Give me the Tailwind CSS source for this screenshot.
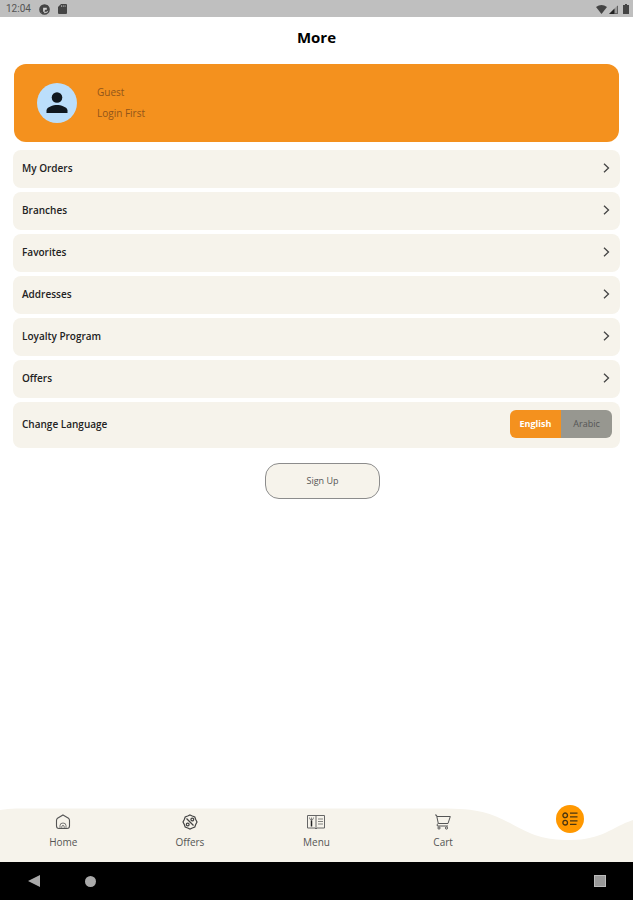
<!DOCTYPE html>
<html lang="en">
<head>
    <meta charset="UTF-8">
    <meta name="viewport" content="width=device-width, initial-scale=1.0">
    <title>More</title>
    <script src="https://cdn.jsdelivr.net/npm/@tailwindcss/browser@4"></script>
</head>
<body class="bg-white text-[#222] font-['Open_Sans',sans-serif] min-h-screen flex flex-col">
    <!-- Status bar -->
    <div class="bg-[#bfbfbf] h-[17px] pl-[6px] pr-1 pt-px flex items-center justify-between text-[#444]">
        <div class="flex items-center gap-2">
            <span class="font-[Roboto,sans-serif] text-[10px] leading-4 text-[#555]">12:04</span>
            <svg class="w-[11px] h-[11px]" viewBox="0 0 12 12">
                <circle cx="6" cy="6" r="5" fill="none" stroke="currentColor" stroke-width="1.6"/>
                <path d="M1 4L3.500 1h5.500l2 3v2.500L8 8.500H6L4.500 11L1.500 8z" fill="currentColor"/>
                <path d="M4.500 4h4v2.200h-2.200V8.500H4.500z" fill="#d4d4d4"/>
            </svg>
            <svg class="w-[9px] h-[10px]" viewBox="0 0 9 10">
                <path d="M3 0h5q1 0 1 1v8q0 1-1 1H1q-1 0-1-1V3z" fill="currentColor"/>
                <path d="M3.500 1.200v1.800M5.300 1.200v1.800M7.100 1.200v1.800" stroke="#bfbfbf" stroke-width=".7"/>
            </svg>
        </div>
        <div class="flex items-center gap-[2px]">
            <svg class="w-[11px] h-[9px]" viewBox="0 0 11 9"><path d="M0 2Q5.500-1.800 11 2L5.500 9z" fill="currentColor"/></svg>
            <svg class="w-[9px] h-[9px]" viewBox="0 0 9 9">
                <path d="M9 0v9H0z" fill="#999"/>
                <path d="M5.500 3.500V9H0z" fill="#222"/>
                <path d="M8.600 1v7.600H5" fill="none" stroke="currentColor" stroke-width=".7"/>
            </svg>
            <svg class="w-[6px] h-[10px] ml-[3px]" viewBox="0 0 6 10"><path d="M2 0h2v1h2v9H0V1h2z" fill="currentColor"/></svg>
        </div>
    </div>

    <header class="h-[47px] pb-[7px] flex items-center justify-center">
        <h1 class="text-[15px] font-bold text-black">More</h1>
    </header>

    <main class="flex-1 px-[13px]">
        <!-- User card -->
        <section class="bg-[#f4911e] rounded-xl mx-px h-[78px] pl-[23px] flex items-center gap-5">
            <svg class="w-10 h-10" viewBox="0 0 40 40">
                <circle cx="20" cy="20" r="20" fill="#bbdefb"/>
                <circle cx="20" cy="14.500" r="5.300" fill="#101820"/>
                <path d="M9.500 30v-2.500c0-3.500 7-5.400 10.500-5.400s10.500 1.900 10.500 5.400V30z" fill="#101820"/>
            </svg>
            <div class="text-[10px] leading-[21px] text-[#91551a]">
                <p>Guest</p>
                <p>Login First</p>
            </div>
        </section>

        <!-- Menu -->
        <nav class="mt-2 flex flex-col gap-1 text-[10px] font-semibold">
            <a href="#" class="h-[38px] bg-[#f6f3eb] rounded-lg pl-[9px] pr-[10px] pb-[2px] flex items-center justify-between">
                My Orders
                <svg class="w-[7px] h-[10px]" viewBox="0 0 7 10" fill="none" stroke="#444" stroke-width="1.300"><path d="M1 .8L5.500 5L1 9.200"/></svg>
            </a>
            <a href="#" class="h-[38px] bg-[#f6f3eb] rounded-lg pl-[9px] pr-[10px] pb-[2px] flex items-center justify-between">
                Branches
                <svg class="w-[7px] h-[10px]" viewBox="0 0 7 10" fill="none" stroke="#444" stroke-width="1.300"><path d="M1 .8L5.500 5L1 9.200"/></svg>
            </a>
            <a href="#" class="h-[38px] bg-[#f6f3eb] rounded-lg pl-[9px] pr-[10px] pb-[2px] flex items-center justify-between">
                Favorites
                <svg class="w-[7px] h-[10px]" viewBox="0 0 7 10" fill="none" stroke="#444" stroke-width="1.300"><path d="M1 .8L5.500 5L1 9.200"/></svg>
            </a>
            <a href="#" class="h-[38px] bg-[#f6f3eb] rounded-lg pl-[9px] pr-[10px] pb-[2px] flex items-center justify-between">
                Addresses
                <svg class="w-[7px] h-[10px]" viewBox="0 0 7 10" fill="none" stroke="#444" stroke-width="1.300"><path d="M1 .8L5.500 5L1 9.200"/></svg>
            </a>
            <a href="#" class="h-[38px] bg-[#f6f3eb] rounded-lg pl-[9px] pr-[10px] pb-[2px] flex items-center justify-between">
                Loyalty Program
                <svg class="w-[7px] h-[10px]" viewBox="0 0 7 10" fill="none" stroke="#444" stroke-width="1.300"><path d="M1 .8L5.500 5L1 9.200"/></svg>
            </a>
            <a href="#" class="h-[38px] bg-[#f6f3eb] rounded-lg pl-[9px] pr-[10px] pb-[2px] flex items-center justify-between">
                Offers
                <svg class="w-[7px] h-[10px]" viewBox="0 0 7 10" fill="none" stroke="#444" stroke-width="1.300"><path d="M1 .8L5.500 5L1 9.200"/></svg>
            </a>
            <div class="h-[46px] bg-[#f6f3eb] rounded-lg pl-[9px] pr-2 pb-[2px] flex items-center justify-between">
                <span>Change Language</span>
                <div class="flex h-7 rounded-md overflow-hidden text-[9px]">
                    <button class="w-[51px] bg-[#f4911e] text-white font-bold">English</button>
                    <button class="w-[51px] bg-[#979790] text-[#555] font-normal">Arabic</button>
                </div>
            </div>
        </nav>

        <div class="mt-[15px] pl-3 flex justify-center">
            <button class="w-[115px] h-9 bg-[#f6f3eb] border border-[#8c8c8c] rounded-[14px] text-[9px] text-[#555]">Sign Up</button>
        </div>
    </main>

    <!-- Bottom tabs -->
    <nav class="relative h-[54px] text-[10px] leading-4 text-[#555]">
        <svg class="absolute inset-0 w-full h-full" viewBox="0 0 633 54" preserveAspectRatio="none">
            <path d="M0 2Q8 .5 16 .5H440C480 .5 490 5 510 15C532 27 543 32 570 32C602 32 612 19 633 12V54H0z" fill="#f6f3eb"/>
        </svg>
        <div class="relative grid grid-cols-5 h-full">
            <a href="#" class="flex flex-col items-center pt-[6px] gap-1">
                <svg class="w-4 h-4" viewBox="0 0 16 16" fill="none" stroke="#555" stroke-width="1.100">
                    <path d="M8 1L13.500 4.200Q14.500 5 14.500 6.500V12Q14.500 14.500 12 14.500H4Q1.500 14.500 1.500 12V6.500Q1.500 5 2.500 4.200z"/>
                    <path d="M5 14.500V11.500Q5 9 8 9t3 2.500V14.500M6.800 14.500v-2q0-1 1.200-1t1.200 1v2" stroke-width=".8"/>
                </svg>
                Home
            </a>
            <a href="#" class="flex flex-col items-center pt-[6px] gap-1">
                <svg class="w-4 h-4" viewBox="0 0 16 16" fill="none" stroke="#444" stroke-width="1.200">
                    <path d="M8 1L10.300 2L12.800 3L13.700 5.500L15 8L13.700 10.500L12.800 13L10.300 14L8 15L5.700 14L3.200 13L2.300 10.500L1 8L2.300 5.500L3.200 3L5.700 2z"/>
                    <path d="M4.500 4.500L11.500 11.500"/>
                    <circle cx="10.300" cy="5.500" r="1.400"/>
                    <circle cx="5.700" cy="10.500" r="1.400"/>
                </svg>
                Offers
            </a>
            <a href="#" class="flex flex-col items-center pt-[6px] gap-1">
                <svg class="w-[18px] h-4" viewBox="0 0 18 16" fill="none" stroke="#666" stroke-width="1">
                    <path d="M.500 1.500h17v12.500H10L9 15L8 14H.500zM9 2v12"/>
                    <path d="M2.500 3.500q0 2.500 2 2.500t2-2.500M4.500 3.500v3M11 5h5M11 7.500h5M11 10h5" stroke-width=".8"/>
                    <path d="M4.500 6.500v6" stroke="#222" stroke-width="1.500"/>
                </svg>
                Menu
            </a>
            <a href="#" class="flex flex-col items-center pt-[6px] gap-1">
                <svg class="w-4 h-4" viewBox="0 0 16 16" fill="none" stroke="#555" stroke-width="1">
                    <path d="M0 1h1.500L3.300 9.500H13L15.300 2.500H2M3.300 9.500Q1.500 10 2.300 12H13"/>
                    <circle cx="4" cy="14" r="1.100"/>
                    <circle cx="11.500" cy="14" r="1.100"/>
                </svg>
                Cart
            </a>
            <a href="#" aria-label="More" class="w-7 h-7 -mt-[3px] justify-self-center rounded-full bg-[#ff9800] flex items-center justify-center">
                <svg class="w-4 h-4" viewBox="0 0 16 16" fill="none" stroke="#4a3510" stroke-width="1.300">
                    <circle cx="3.200" cy="4.300" r="2.300"/>
                    <circle cx="3.200" cy="11.700" r="2.300"/>
                    <path d="M8 2.200H15.500M8 5.800H15.500M8 9.800H15.500M8 13.300H14.500"/>
                </svg>
            </a>
        </div>
    </nav>

    <!-- System navigation -->
    <div class="bg-black h-[38px] pl-7 pr-[27px] flex items-center justify-between">
        <div class="flex items-center gap-[45px]">
            <svg class="w-3 h-3" viewBox="0 0 12 12"><path d="M12 0v12L0 6z" fill="#aaa"/></svg>
            <div class="w-[11px] h-[11px] rounded-full bg-[#aaa]"></div>
        </div>
        <div class="w-3 h-3 bg-[#999] border border-[#bbb]"></div>
    </div>
</body>
</html>
